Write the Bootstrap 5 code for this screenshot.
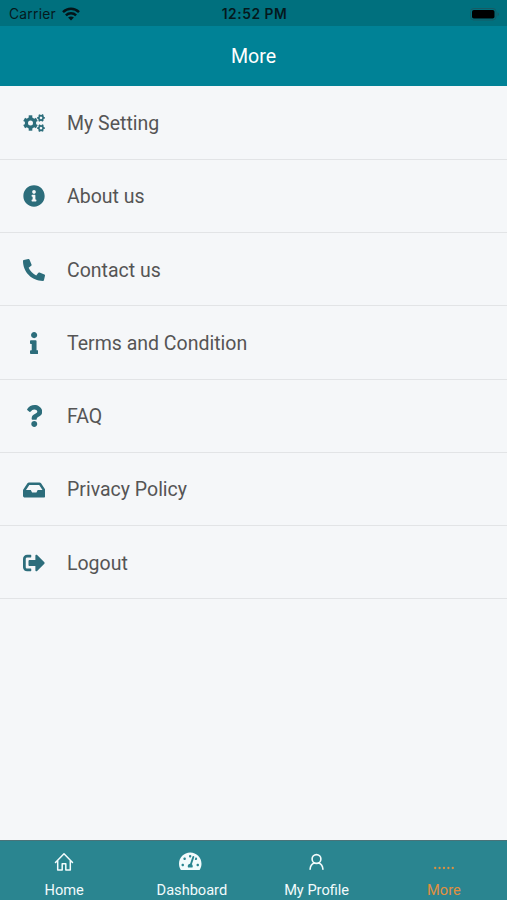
<!DOCTYPE html>
<html lang="en">
<head>
<meta charset="utf-8">
<meta name="viewport" content="width=device-width, initial-scale=1">
<title>More</title>
<link href="https://cdn.jsdelivr.net/npm/bootstrap@5.3.0/dist/css/bootstrap.min.css" rel="stylesheet">
<style>
body { font-family: Roboto, sans-serif; background: #f5f7f9; height: 900px; overflow: hidden; }
svg { display: block; flex: none; }
.status-bar { height: 26px; background: #00707e; color: #05191d; font: 500 14px/26px Inter, sans-serif; padding: 1px 7px 0 9px; }
.status-bar .carrier { font-size: 13.8px; font-weight: 400; letter-spacing: .25px; }
.status-bar .wifi { margin-left: 6px; }
.status-bar .clock { font-weight: 600; font-size: 13.8px; letter-spacing: .55px; }
.title-bar { height: 60px; background: #008296; color: #fff; font-size: 19.6px; padding-top: 1px; }
.menu-row { height: 73.3px; border-bottom: 1px solid #e2e4e6 !important; color: #555; font-size: 19.5px; padding: 1px 22px 0; gap: 21px; background: transparent; }
.menu-row .menu-label { padding-top: 1px; }
.menu-icon { width: 24px; color: #2c6d7b; }
.menu-list { padding-top: .4px; }
.tab-bar { height: 60px; background: #2a8590; border-top: 1px solid #4a7379; }
.tab-item { color: #f2fbfc; font-size: 14.6px; line-height: 18px; padding-top: 10px; }
.tab-item.tab-home { padding-left: 1px; }
.tab-item.tab-dash .tab-text { padding-left: 3px; }
.tab-item.tab-profile { padding-right: 1px; }
.tab-item.current { color: #e1903f; }
.tab-icon { height: 22px; margin-bottom: 8px; }
</style>
<script src="https://cdn.jsdelivr.net/npm/bootstrap@5.3.0/dist/js/bootstrap.bundle.min.js"></script>
</head>
<body class="d-flex flex-column">
<header class="flex-shrink-0">
  <div class="status-bar row g-0 align-items-center">
    <div class="col d-flex align-items-center">
      <span class="carrier">Carrier</span>
      <svg class="wifi" width="18" height="14" viewBox="0 0 18 14" fill="none" stroke="#041519" stroke-width="2.5"><path d="M1 5.2C5.6.7 12.4.7 17 5.2M3.9 8.3c2.9-2.8 7.3-2.8 10.2 0"/><path d="M9 13.5 6.1 10.600c1.700-1.500 4.100-1.500 5.800 0z" fill="#041519" stroke="none"/></svg>
    </div>
    <div class="col-auto clock">12:52 PM</div>
    <div class="col d-flex justify-content-end">
      <svg width="30" height="13" viewBox="0 0 30 13"><rect x=".5" y=".5" width="25.5" height="11.5" rx="3.2" fill="none" stroke="#175b64"/><rect x="2" y="2" width="22.500" height="8.500" rx="1.8" fill="#000"/><path d="M27.500 4.200c2 .7 2 3.400 0 4.100z" fill="#175b64"/></svg>
    </div>
  </div>
  <div class="title-bar d-flex align-items-center justify-content-center">More</div>
</header>

<main class="flex-grow-1">
  <div class="menu-list list-group list-group-flush">
    <a class="menu-row list-group-item d-flex align-items-center" href="#">
      <span class="menu-icon d-flex justify-content-center">
        <svg width="24" height="20" viewBox="0 0 24 20" fill="none" stroke="currentColor">
          <defs>
            <g id="gear"><circle r="4.100" stroke-width="3.200"/><g stroke-width="3.600"><path d="M0-4.500V-7.700"/><path d="M0-4.500V-7.300" transform="rotate(60)"/><path d="M0-4.500V-7.300" transform="rotate(120)"/><path d="M0-4.500V-7.700" transform="rotate(180)"/><path d="M0-4.500V-7.300" transform="rotate(240)"/><path d="M0-4.500V-7.300" transform="rotate(300)"/></g></g>
          </defs>
          <use href="#gear" transform="translate(8.500 10)"/>
          <use href="#gear" transform="translate(19 4.900) rotate(30) scale(.52)"/>
          <use href="#gear" transform="translate(19 15.100) rotate(30) scale(.52)"/>
        </svg>
      </span><span class="menu-label">My Setting</span></a>
    <a class="menu-row list-group-item d-flex align-items-center" href="#">
      <span class="menu-icon d-flex justify-content-center"><svg width="22" height="22" viewBox="0 0 512 512" fill="currentColor"><path d="M256 8C119.043 8 8 119.083 8 256c0 136.997 111.043 248 248 248s248-111.003 248-248C504 119.083 392.957 8 256 8zm0 110c23.196 0 42 18.804 42 42s-18.804 42-42 42-42-18.804-42-42 18.804-42 42-42zm56 254c0 6.627-5.373 12-12 12h-88c-6.627 0-12-5.373-12-12v-24c0-6.627 5.373-12 12-12h12v-64h-12c-6.627 0-12-5.373-12-12v-24c0-6.627 5.373-12 12-12h64c6.627 0 12 5.373 12 12v100h12c6.627 0 12 5.373 12 12v24z"/></svg></span><span class="menu-label">About us</span></a>
    <a class="menu-row list-group-item d-flex align-items-center" href="#">
      <span class="menu-icon d-flex justify-content-center"><svg width="22" height="22" viewBox="0 0 512 512" fill="currentColor"><path d="M497.390 361.800l-112-48a24 24 0 0 0-28 6.900l-49.600 60.600A370.660 370.660 0 0 1 130.600 204.110l60.600-49.600a23.940 23.940 0 0 0 6.900-28l-48-112A24.160 24.160 0 0 0 122.600.61l-104 24A24 24 0 0 0 0 48c0 256.500 207.900 464 464 464a24 24 0 0 0 23.400-18.600l24-104a24.290 24.290 0 0 0-14.010-27.600z"/></svg></span><span class="menu-label">Contact us</span></a>
    <a class="menu-row list-group-item d-flex align-items-center" href="#">
      <span class="menu-icon d-flex justify-content-center"><svg width="8.250" height="22" viewBox="0 0 192 512" fill="currentColor"><path d="M20 424.229h20V279.771H20c-11.046 0-20-8.954-20-20V212c0-11.046 8.954-20 20-20h112c11.046 0 20 8.954 20 20v212.229h20c11.046 0 20 8.954 20 20V492c0 11.046-8.954 20-20 20H20c-11.046 0-20-8.954-20-20v-47.771c0-11.046 8.954-20 20-20zM96 0C56.235 0 24 32.235 24 72s32.235 72 72 72 72-32.235 72-72S135.764 0 96 0z"/></svg></span><span class="menu-label">Terms and Condition</span></a>
    <a class="menu-row list-group-item d-flex align-items-center" href="#">
      <span class="menu-icon d-flex justify-content-center"><svg width="16.500" height="22" viewBox="0 0 384 512" fill="currentColor"><path d="M202.021 0C122.202 0 70.503 32.703 29.914 91.026c-7.363 10.580-5.093 25.086 5.178 32.874l43.138 32.709c10.373 7.865 25.132 6.026 33.253-4.148 25.049-31.381 43.630-49.449 82.757-49.449 30.764 0 68.816 19.799 68.816 49.631 0 22.552-18.617 34.134-48.993 51.164-35.423 19.860-82.299 44.576-82.299 106.405V320c0 13.255 10.745 24 24 24h72.471c13.255 0 24-10.745 24-24v-5.773c0-42.860 125.268-44.645 125.268-160.627C377.504 66.256 286.902 0 202.021 0zM192 373.459c-38.196 0-69.271 31.075-69.271 69.271 0 38.195 31.075 69.270 69.271 69.270s69.271-31.075 69.271-69.271-31.075-69.270-69.271-69.270z"/></svg></span><span class="menu-label">FAQ</span></a>
    <a class="menu-row list-group-item d-flex align-items-center" href="#">
      <span class="menu-icon d-flex justify-content-center"><svg width="22.500" height="20" viewBox="0 0 576 512" fill="currentColor"><path d="M567.938 243.908L462.250 85.374A48.003 48.003 0 0 0 422.311 64H153.689a48 48 0 0 0-39.938 21.374L8.062 243.908A47.994 47.994 0 0 0 0 270.533V400c0 26.510 21.490 48 48 48h480c26.510 0 48-21.490 48-48V270.533a47.994 47.994 0 0 0-8.062-26.625zM162.252 128h251.497l85.333 128H376l-32 64H232l-32-64H76.918l85.334-128z"/></svg></span><span class="menu-label">Privacy Policy</span></a>
    <a class="menu-row list-group-item d-flex align-items-center" href="#">
      <span class="menu-icon d-flex justify-content-center"><svg width="22" height="22" viewBox="0 0 512 512" fill="currentColor"><path d="M497 273L329 441c-15 15-41 4.500-41-17v-96H152c-13.300 0-24-10.700-24-24v-96c0-13.300 10.700-24 24-24h136V88c0-21.400 25.900-32 41-17l168 168c9.300 9.400 9.300 24.600 0 34zM192 436v-40c0-6.600-5.400-12-12-12H96c-17.700 0-32-14.300-32-32V160c0-17.700 14.300-32 32-32h84c6.600 0 12-5.400 12-12V76c0-6.600-5.400-12-12-12H96c-53 0-96 43-96 96v192c0 53 43 96 96 96h84c6.600 0 12-5.400 12-12z"/></svg></span><span class="menu-label">Logout</span></a>
  </div>
</main>

<nav class="tab-bar row g-0 flex-shrink-0">
  <div class="tab-item tab-home col d-flex flex-column align-items-center">
    <span class="tab-icon"><svg width="20" height="22" viewBox="0 0 20 22" fill="none" stroke="currentColor" stroke-width="1.500" stroke-linejoin="round" stroke-linecap="round"><path d="M1.500 11.400 10 2.700l8.500 8.700M3.700 9.800v9.100h4.500v-6.200h3.600v6.200h4.500V9.800"/></svg></span>
    <span class="tab-text">Home</span>
  </div>
  <div class="tab-item tab-dash col d-flex flex-column align-items-center">
    <span class="tab-icon"><svg width="22.500" height="20.500" viewBox="0 0 576 512" fill="currentColor"><path d="M288 32C128.940 32 0 160.940 0 320c0 52.800 14.250 102.260 39.060 144.800 5.610 9.620 16.300 15.200 27.440 15.200h443c11.140 0 21.830-5.580 27.440-15.200C561.750 422.260 576 372.800 576 320c0-159.060-128.940-288-288-288zm0 64c14.710 0 26.580 10.130 30.320 23.650-1.110 2.260-2.640 4.230-3.450 6.670l-9.220 27.670c-5.130 3.490-10.970 6.010-17.640 6.010-17.670 0-32-14.330-32-32S270.330 96 288 96zM96 384c-17.670 0-32-14.330-32-32s14.330-32 32-32 32 14.330 32 32-14.330 32-32 32zm48-160c-17.670 0-32-14.330-32-32s14.330-32 32-32 32 14.330 32 32-14.330 32-32 32zm246.770-72.410l-61.330 184C343.130 347.330 352 364.540 352 384c0 11.720-3.380 22.550-8.880 32H232.880c-5.500-9.450-8.880-20.280-8.880-32 0-33.940 26.500-61.430 59.900-63.590l61.340-184.010c4.170-12.560 17.730-19.450 30.360-15.170 12.570 4.190 19.350 17.790 15.170 30.360zm14.660 57.200l15.520-46.550c3.470-1.290 7.130-2.230 11.050-2.230 17.670 0 32 14.330 32 32s-14.330 32-32 32c-11.380-.01-20.890-6.280-26.570-15.220zM480 384c-17.670 0-32-14.330-32-32s14.330-32 32-32 32 14.330 32 32-14.330 32-32 32z"/></svg></span>
    <span class="tab-text">Dashboard</span>
  </div>
  <div class="tab-item tab-profile col d-flex flex-column align-items-center">
    <span class="tab-icon"><svg width="18" height="22" viewBox="0 0 18 22" fill="none" stroke="currentColor" stroke-width="1.600" stroke-linecap="round"><circle cx="8.500" cy="8" r="4.400"/><path d="M2.100 18.200c.2-3.300 1.900-5.500 4.200-6.200M14.900 18.200c-.2-3.300-1.900-5.500-4.200-6.200"/></svg></span>
    <span class="tab-text">My Profile</span>
  </div>
  <div class="tab-item current col d-flex flex-column align-items-center">
    <span class="tab-icon"><svg width="22" height="22" viewBox="0 0 22 22" fill="currentColor"><circle cx="2.200" cy="17" r="1.150"/><circle cx="6.600" cy="17" r="1.150"/><circle cx="11" cy="17" r="1.150"/><circle cx="15.400" cy="17" r="1.150"/><circle cx="19.800" cy="17" r="1.150"/></svg></span>
    <span class="tab-text">More</span>
  </div>
</nav>
</body>
</html>
